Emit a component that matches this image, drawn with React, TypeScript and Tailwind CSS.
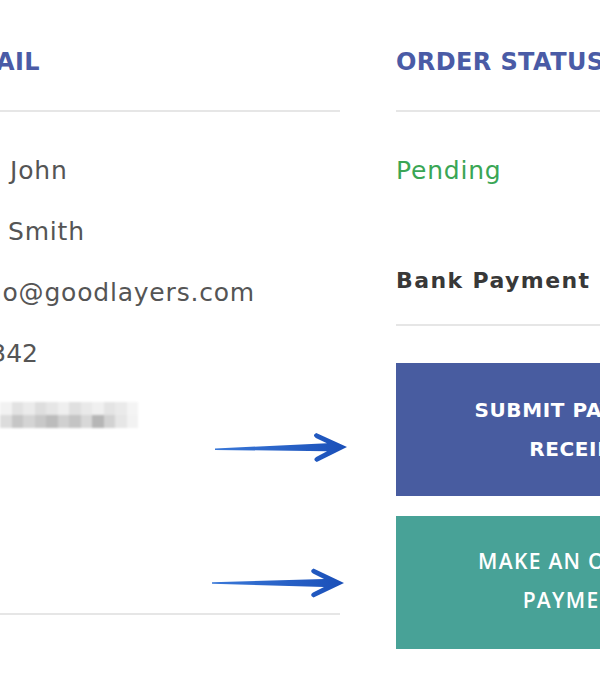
import React from "react";

function Arrow({ className }: { className: string }) {
  return (
    <svg className={className} width="140" height="34" viewBox="-2 -17 140 34">
      <defs>
        <linearGradient id="ag" x1="0" x2="1" y1="0" y2="0">
          <stop offset="0" stopColor="#3a78d8" />
          <stop offset="1" stopColor="#1a4fb8" />
        </linearGradient>
      </defs>
      <path
        d="M0,-0.7 L112,-4 L101,-9.5 Q97,-12.5 101.5,-14.5 L132,0 L101.5,14.5 Q97,12.5 101,9.5 L112,4 L0,0.7 Z"
        fill="url(#ag)"
      />
    </svg>
  );
}

function EndAligned({ width, children, className }: { width: string; children: React.ReactNode; className: string }) {
  return (
    <div className={`flex justify-end whitespace-nowrap ${width}`}>
      <span className={className}>{children}</span>
    </div>
  );
}

export default function App() {
  const top = ["#f2f2f2", "#e2e2e2", "#ebebeb", "#dedede", "#e6e6e6", "#efefef", "#e0e0e0", "#e9e9e9", "#f0f0f0", "#e4e4e4", "#eaeaea", "#f4f4f4"];
  const bot = ["#dcdcdc", "#c6c6c6", "#d4d4d4", "#c8c8c8", "#bcbcbc", "#d0d0d0", "#c4c4c4", "#d8d8d8", "#b6b6b6", "#d2d2d2", "#e6e6e6", "#f2f2f2"];
  return (
    <div className="relative w-[600px] h-[700px] overflow-hidden bg-white" style={{ fontFamily: '"DejaVu Sans", "Open Sans", sans-serif' }}>
      <div className="flex gap-[56px] pt-[44px]">
        {/* Left column */}
        <div className="w-[340px] shrink-0">
          <EndAligned width="w-[40px]" className="text-[24px] leading-[36px] font-bold tracking-[0.4px] text-[#4a5ba6]">
            CUSTOMER DETAIL
          </EndAligned>
          <div className="mt-[30px] h-[2px] bg-[#e6e6e6]" />
          <div className="mt-[28px] text-[25px] leading-[61px] tracking-[0.8px] text-[#555555]">
            <div className="pl-[10px]">John</div>
            <div className="pl-[8px]">Smith</div>
            <EndAligned width="w-[255px]" className="">demo@goodlayers.com</EndAligned>
            <EndAligned width="w-[38px]" className="tracking-[0px]">0812342342</EndAligned>
            <div className="h-[61px] flex items-center">
              <div className="flex flex-col w-[138px] h-[26px] blur-[1px]">
                <div className="flex flex-1">
                  {top.map((c, i) => (
                    <div key={i} className="flex-1 h-full" style={{ backgroundColor: c }} />
                  ))}
                </div>
                <div className="flex flex-1">
                  {bot.map((c, i) => (
                    <div key={i} className="flex-1 h-full" style={{ backgroundColor: c }} />
                  ))}
                </div>
              </div>
            </div>
          </div>
          <div className="mt-[168px] h-[2px] bg-[#e6e6e6]" />
        </div>

        {/* Right column */}
        <div className="w-[358px] shrink-0">
          <div className="whitespace-nowrap text-[24px] leading-[36px] font-bold tracking-[0.4px] text-[#4a5ba6]">
            ORDER STATUS
          </div>
          <div className="mt-[30px] h-[2px] bg-[#e6e6e6]" />
          <div className="mt-[28px] text-[25px] leading-[61px] tracking-[0.8px] text-[#3aa655]">Pending</div>
          <div className="mt-[62px] text-[22px] leading-[36px] font-bold tracking-[1.4px] text-[#383838] whitespace-nowrap">Bank Payment</div>
          <div className="mt-[25px] h-[2px] bg-[#e6e6e6]" />
          <div className="mt-[37px] flex flex-col gap-[20px]">
            <div className="h-[133px] bg-[#485ca0] flex items-center justify-center text-center text-white text-[20px] leading-[39px] font-bold tracking-[0.6px] pl-[6px]">
              <div>
                SUBMIT PAYMENT
                <br />
                RECEIPT
              </div>
            </div>
            <div
              className="h-[133px] bg-[#48a297] flex items-center justify-center text-center text-white text-[21px] leading-[39px] font-semibold tracking-[1.3px] pl-[3px]"
              style={{ fontFamily: '"Open Sans", sans-serif' }}
            >
              <div className="-mt-[4px]">
                MAKE AN ONLINE
                <br />
                PAYMENT
              </div>
            </div>
          </div>
        </div>
      </div>

      <Arrow className="absolute left-[213px] top-[431px] -rotate-1" />
      <Arrow className="absolute left-[210px] top-[566px]" />
    </div>
  );
}
